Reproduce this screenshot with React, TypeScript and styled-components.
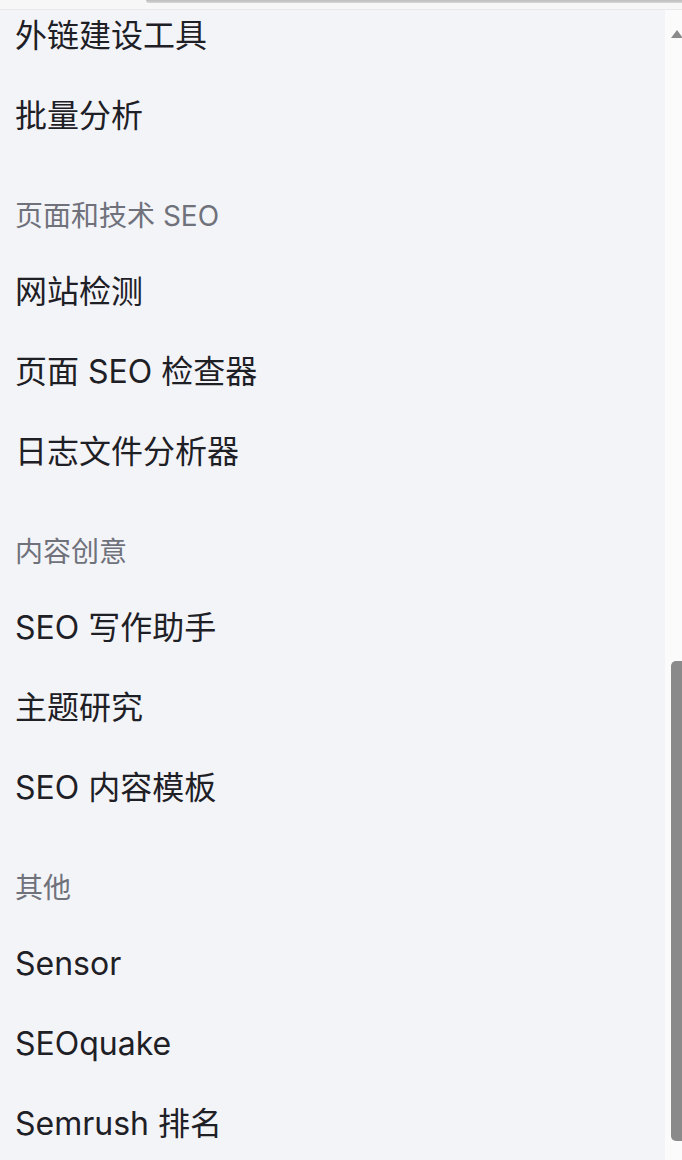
import React from "react";
import styled, { createGlobalStyle } from "styled-components";

const Global = createGlobalStyle`
  html, body { margin: 0; padding: 0; background: #f3f4f8; }
  body { font-family: Inter, "Noto Sans CJK SC", sans-serif; }
  * { box-sizing: border-box; }
`;

const Page = styled.div`
  width: 682px;
  height: 1160px;
  display: flex;
  flex-direction: column;
  overflow: hidden;
`;

const TopStrip = styled.div`
  height: 10px;
  flex: none;
  background: #f7f7f7;
  border-bottom: 1px solid #e9e9ec;
  display: flex;
  align-items: flex-start;
`;

const HThumb = styled.div`
  margin-left: 146px;
  flex: 1;
  height: 3px;
  background: linear-gradient(#bdbdbd, #d6d6d6);
  border-radius: 0 0 0 8px;
`;

const Body = styled.div`
  flex: 1;
  display: flex;
  min-height: 0;
`;

const Panel = styled.nav`
  flex: 1;
  background: #f3f4f8;
  overflow: hidden;
`;

const List = styled.div`
  margin-top: -14px;
  display: flex;
  flex-direction: column;
`;

const Item = styled.div`
  height: 80px;
  display: flex;
  align-items: center;
  padding-left: 15px;
  font-size: 32px;
  line-height: 40px;
  color: #1e2026;
  white-space: nowrap;
`;

const Heading = styled.div`
  padding: 40px 0 16px 15px;
  font-size: 28px;
  line-height: 40px;
  color: #6f717b;
  white-space: nowrap;
`;

const Track = styled.div`
  width: 17px;
  flex: none;
  background: #fbfbfb;
  display: flex;
  flex-direction: column;
  overflow: hidden;
`;

const Arrow = styled.svg`
  margin: 19px 0 0 5px;
  flex: none;
`;

const Thumb = styled.div`
  margin: 623px 0 0 6px;
  width: 14px;
  height: 480px;
  background: #8a8a8a;
  border-radius: 5px 0 0 5px;
  flex: none;
`;

type Entry = { kind: "item" | "heading"; text: string };

const entries: Entry[] = [
  { kind: "item", text: "外链建设工具" },
  { kind: "item", text: "批量分析" },
  { kind: "heading", text: "页面和技术 SEO" },
  { kind: "item", text: "网站检测" },
  { kind: "item", text: "页面 SEO 检查器" },
  { kind: "item", text: "日志文件分析器" },
  { kind: "heading", text: "内容创意" },
  { kind: "item", text: "SEO 写作助手" },
  { kind: "item", text: "主题研究" },
  { kind: "item", text: "SEO 内容模板" },
  { kind: "heading", text: "其他" },
  { kind: "item", text: "Sensor" },
  { kind: "item", text: "SEOquake" },
  { kind: "item", text: "Semrush 排名" },
];

export default function App() {
  return (
    <>
      <Global />
      <Page>
        <TopStrip>
          <HThumb />
        </TopStrip>
        <Body>
          <Panel>
            <List>
              {entries.map((e, i) =>
                e.kind === "heading" ? (
                  <Heading key={i}>{e.text}</Heading>
                ) : (
                  <Item key={i}>{e.text}</Item>
                )
              )}
            </List>
          </Panel>
          <Track>
            <Arrow width="12" height="9" viewBox="0 0 12 9">
              <polygon points="1,9 7,1 13,9" fill="#8a8a8a" />
            </Arrow>
            <Thumb />
          </Track>
        </Body>
      </Page>
    </>
  );
}
